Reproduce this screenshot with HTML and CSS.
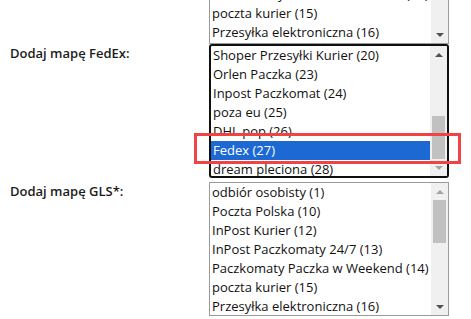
FILE: index.html
```html
<!DOCTYPE html>
<html>
<head>
  <meta charset="UTF-8" />
  <title>Mapowanie form dostawy</title>
  <link rel="stylesheet" href="styles.css">
</head>
<body>
  <!-- Delivery map fields -->
  <div id="mapForm">
    <!-- row above, mostly scrolled out of view -->
    <div class="form-row">
      <div class="form-label"></div>
      <div class="listbox">
        <div class="listbox-options options-raised">
          <div class="option">odbiór osobisty (1)</div>
          <div class="option">Poczta Polska (10)</div>
          <div class="option">InPost Kurier (12)</div>
          <div class="option">InPost Paczkomaty 24/7 (13)</div>
          <div class="option">Paczkomaty Paczka w Weekend (14)</div>
          <div class="option">poczta kurier (15)</div>
          <div class="option">Przesyłka elektroniczna (16)</div>
        </div>
        <div class="scrollbar">
          <div class="scroll-btn"><span class="arrow-up off"></span></div>
          <div class="scroll-track"><div class="scroll-thumb thumb-top"></div></div>
          <div class="scroll-btn"><span class="arrow-down"></span></div>
        </div>
      </div>
    </div>

    <div class="form-row">
      <div class="form-label">Dodaj mapę FedEx:</div>
      <div class="listbox focused">
        <div class="listbox-options">
          <div class="option">Shoper Przesyłki Kurier (20)</div>
          <div class="option">Orlen Paczka (23)</div>
          <div class="option">Inpost Paczkomat (24)</div>
          <div class="option">poza eu (25)</div>
          <div class="option">DHL pop (26)</div>
          <div class="option selected">Fedex (27)</div>
          <div class="option">dream pleciona (28)</div>
        </div>
        <div class="scrollbar">
          <div class="scroll-btn"><span class="arrow-up"></span></div>
          <div class="scroll-track"><div class="scroll-thumb thumb-bottom"></div></div>
          <div class="scroll-btn"><span class="arrow-down off"></span></div>
        </div>
      </div>
    </div>

    <div class="form-row gls-row">
      <div class="form-label">Dodaj mapę GLS*:</div>
      <div class="listbox">
        <div class="listbox-options">
          <div class="option">odbiór osobisty (1)</div>
          <div class="option">Poczta Polska (10)</div>
          <div class="option">InPost Kurier (12)</div>
          <div class="option">InPost Paczkomaty 24/7 (13)</div>
          <div class="option">Paczkomaty Paczka w Weekend (14)</div>
          <div class="option">poczta kurier (15)</div>
          <div class="option">Przesyłka elektroniczna (16)</div>
        </div>
        <div class="scrollbar">
          <div class="scroll-btn"><span class="arrow-up off"></span></div>
          <div class="scroll-track"><div class="scroll-thumb thumb-top"></div></div>
          <div class="scroll-btn"><span class="arrow-down"></span></div>
        </div>
      </div>
    </div>
  </div>

  <!-- red highlight drawn over the Fedex option -->
  <div class="annotation"></div>
</body>
</html>
```

FILE: styles.css
```css
/* reset */
* {
  margin: 0;
  padding: 0;
  box-sizing: border-box;
}
body {
  font-family: 'Open Sans', 'Noto Sans', sans-serif;
  font-size: 13px;
  color: #111111;
  background: #ffffff;
  width: 471px;
  height: 319px;
  overflow: hidden;
  position: relative;
}

/* form rows */
#mapForm {
  margin-top: -90px;
  display: flex;
  flex-direction: column;
}
.form-row {
  display: flex;
}
.gls-row {
  margin-top: 4px;
}
.form-label {
  width: 209px;
  padding-left: 10px;
  font-weight: 600;
  line-height: 18px;
  color: #1c1c1c;
}

/* list box (select size=7 look) */
.listbox {
  width: 240px;
  height: 134px;
  border: 1px solid #9a9a9a;
  display: flex;
  overflow: hidden;
  background: #ffffff;
}
.listbox.focused {
  border: 2px solid #101010;
  border-radius: 3px;
}
.listbox-options {
  flex: 1;
  overflow: hidden;
}
.options-raised {
  margin-top: -2px;
}
.option {
  height: 19px;
  line-height: 18px;
  padding: 0 2px 1px;
  white-space: nowrap;
  color: #111111;
}
.option.selected {
  background: #1c69d4;
  color: #ffffff;
}

/* classic scrollbar */
.scrollbar {
  width: 17px;
  background: #f0f0f0;
  display: flex;
  flex-direction: column;
}
.scroll-btn {
  height: 17px;
  display: flex;
  align-items: center;
  justify-content: center;
}
.scroll-track {
  flex: 1;
  display: flex;
  flex-direction: column;
  padding: 0 2px;
}
.scroll-thumb {
  height: 43px;
  background: #c1c1c1;
}
.thumb-bottom {
  margin-top: auto;
}
.arrow-up,
.arrow-down {
  width: 0;
  height: 0;
  border-left: 4px solid transparent;
  border-right: 4px solid transparent;
}
.arrow-up {
  border-bottom: 4px solid #505050;
}
.arrow-down {
  border-top: 4px solid #505050;
}
.arrow-up.off {
  border-bottom-color: #a3a3a3;
}
.arrow-down.off {
  border-top-color: #a3a3a3;
}

/* screenshot annotation */
.annotation {
  position: absolute;
  left: 194px;
  top: 133px;
  width: 267px;
  height: 31px;
  border: 3px solid #f04346;
  pointer-events: none;
}
```
